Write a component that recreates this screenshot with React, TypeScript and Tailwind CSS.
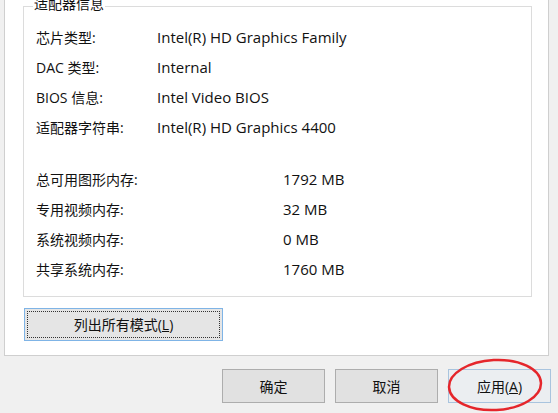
import React from "react";

const font = { fontFamily: '"Open Sans", "Noto Sans CJK SC", sans-serif' };

function Row({ label, value, labelW }: { label: string; value: string; labelW: string }) {
  return (
    <div className="flex h-[30px] items-center">
      <div className={labelW}>{label}</div>
      <div className="text-[15px]">{value}</div>
    </div>
  );
}

function Btn({ children, highlight }: { children: React.ReactNode; highlight?: boolean }) {
  return (
    <div
      className={
        "flex h-[34px] w-[103px] items-center justify-center border text-[14px] text-[#111] " +
        (highlight ? "border-[#a9c4de] bg-[#ebeef1]" : "border-[#adadad] bg-[#e1e1e1]")
      }
    >
      {children}
    </div>
  );
}

export default function App() {
  return (
    <div
      className="relative h-[413px] w-[558px] overflow-hidden bg-[#f0f0f0] text-[14px] text-[#111]"
      style={font}
    >
      <div className="ml-[4px] h-[356px] w-[545px] border border-t-0 border-[#cfcfcf] bg-white pt-[6px]">
        <div className="relative ml-[18px] h-[291px] w-[509px] border border-[#dcdcdc] pl-[12px] pt-[15px]">
          <div className="absolute left-[9px] top-[-13px] bg-white px-[1px] leading-[20px]">适配器信息</div>
          <Row label="芯片类型:" value="Intel(R) HD Graphics Family" labelW="w-[121px]" />
          <Row label="DAC 类型:" value="Internal" labelW="w-[121px]" />
          <Row label="BIOS 信息:" value="Intel Video BIOS" labelW="w-[121px]" />
          <Row label="适配器字符串:" value="Intel(R) HD Graphics 4400" labelW="w-[121px]" />
          <div className="h-[22px]" />
          <Row label="总可用图形内存:" value="1792 MB" labelW="w-[247px]" />
          <Row label="专用视频内存:" value="32 MB" labelW="w-[247px]" />
          <Row label="系统视频内存:" value="0 MB" labelW="w-[247px]" />
          <Row label="共享系统内存:" value="1760 MB" labelW="w-[247px]" />
        </div>
        <div className="ml-[19px] mt-[11px] flex h-[33px] w-[199px] border border-[#7fb4e6] bg-[#e5e5e5] p-[2px]">
          <div className="flex flex-1 items-center justify-center border border-dotted border-[#333] text-[#111]">
            列出所有模式(<span className="underline">L</span>)
          </div>
        </div>
      </div>
      <div className="mt-[13px] flex gap-[10px] pl-[222px]">
        <Btn>确定</Btn>
        <Btn>取消</Btn>
        <Btn highlight>
          应用(<span className="underline">A</span>)
        </Btn>
      </div>
      <svg className="absolute left-0 top-0" width="558" height="413" viewBox="0 0 558 413">
        <ellipse
          cx="495"
          cy="385"
          rx="46"
          ry="25"
          fill="none"
          stroke="#e5262b"
          strokeWidth="2.5"
          transform="rotate(-3 495 385)"
        />
      </svg>
    </div>
  );
}
